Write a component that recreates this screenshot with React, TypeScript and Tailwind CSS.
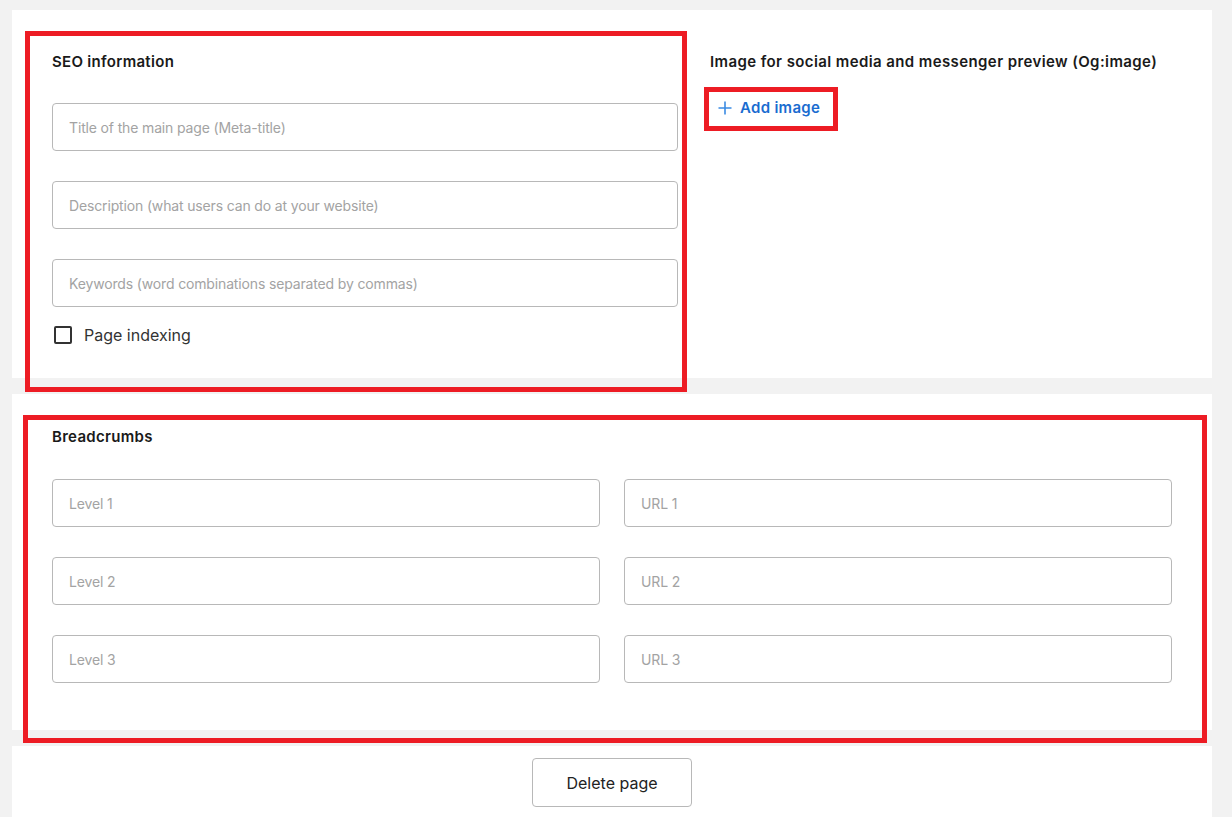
import type { ReactNode } from "react";

const font = { fontFamily: "Inter, 'Noto Sans', sans-serif" };

function Field({ placeholder }: { placeholder: string }) {
  return (
    <input
      type="text"
      placeholder={placeholder}
      className="h-12 w-full rounded-[4px] border border-[#b8b8b8] bg-white px-4 text-sm tracking-[-0.15px] text-[#333] outline-none placeholder:text-[#a3a3a3]"
    />
  );
}

function Card({ className, children }: { className: string; children: ReactNode }) {
  return <section className={`ml-3 mr-5 bg-white ${className}`}>{children}</section>;
}

export default function App() {
  return (
    <div className="relative min-h-[817px] bg-[#f2f2f2] pt-[10px] text-[#1a1a1a]" style={font}>
      <Card className="flex h-[368px] gap-8 px-10 pt-[42px]">
        <div className="w-[626px] shrink-0">
          <h2 className="text-[15px] font-semibold leading-5 tracking-[0.3px]">SEO information</h2>
          <div className="mt-[31px] flex flex-col gap-[30px]">
            <Field placeholder="Title of the main page (Meta-title)" />
            <Field placeholder="Description (what users can do at your website)" />
            <Field placeholder="Keywords (word combinations separated by commas)" />
          </div>
          <label className="mt-[16px] flex items-center gap-3 pl-[2px]">
            <span className="h-[18px] w-[18px] rounded-[2px] border-2 border-[#333]" />
            <span className="text-base text-[#333]">Page indexing</span>
          </label>
        </div>
        <div>
          <h2 className="text-[15px] font-semibold leading-5 tracking-[0.4px]">
            Image for social media and messenger preview (Og:image)
          </h2>
          <button
            type="button"
            className="mt-[26px] flex items-center gap-2 pl-2 text-[15px] font-semibold leading-5 tracking-[0.3px] text-[#1a6cd0]"
          >
            <svg width="14" height="14" viewBox="0 0 14 14" className="text-[#3a8be3]">
              <path d="M7 0.5v13M0.5 7h13" stroke="currentColor" strokeWidth="1.6" />
            </svg>
            Add image
          </button>
        </div>
      </Card>

      <Card className="mt-4 h-[336px] px-10 pt-[33px]">
        <h2 className="text-[15px] font-semibold leading-5 tracking-[0.3px]">Breadcrumbs</h2>
        <div className="mt-8 grid grid-cols-2 gap-x-6 gap-y-[30px]">
          <Field placeholder="Level 1" />
          <Field placeholder="URL 1" />
          <Field placeholder="Level 2" />
          <Field placeholder="URL 2" />
          <Field placeholder="Level 3" />
          <Field placeholder="URL 3" />
        </div>
      </Card>

      <Card className="mt-4 flex h-[71px] justify-center pt-3">
        <button
          type="button"
          className="h-[49px] w-[160px] rounded-[4px] border border-[#b8b8b8] text-base text-[#222]"
        >
          Delete page
        </button>
      </Card>

      {/* annotation frames drawn over the page */}
      <div className="pointer-events-none absolute left-[25px] top-[31px] h-[361px] w-[662px] border-[5px] border-[#ed1c24]" />
      <div className="pointer-events-none absolute left-[704px] top-[87px] h-[44px] w-[134px] border-[5px] border-[#ed1c24]" />
      <div className="pointer-events-none absolute left-[23px] top-[415px] h-[328px] w-[1184px] border-[5px] border-[#ed1c24]" />
    </div>
  );
}
